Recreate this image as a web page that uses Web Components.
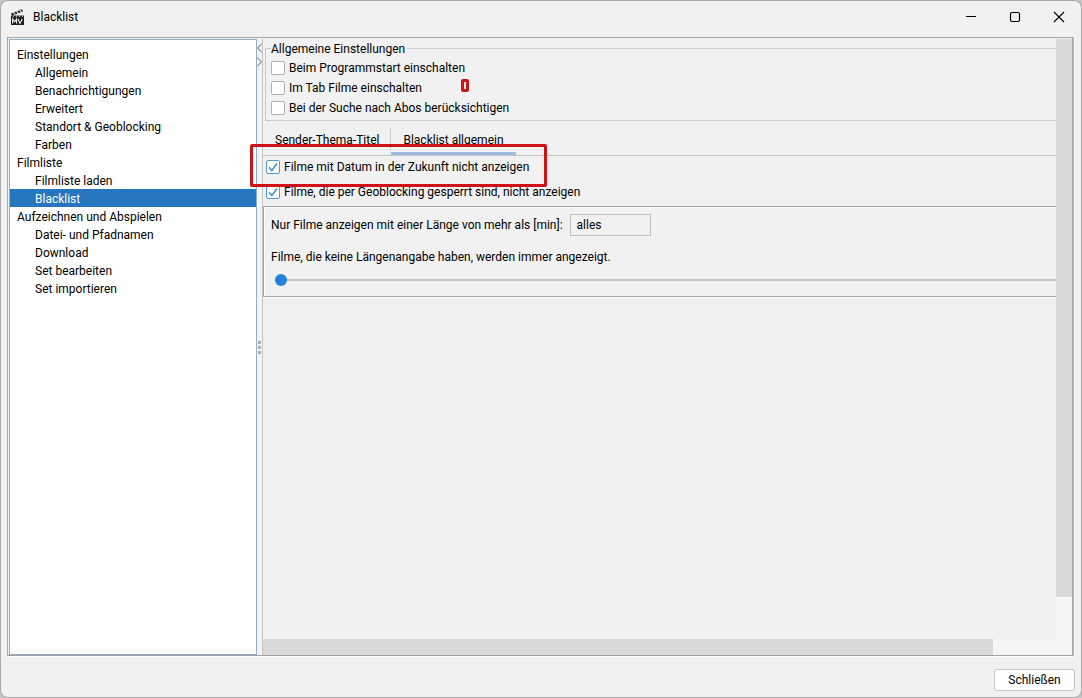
<!DOCTYPE html>
<html lang="de">
<head>
<meta charset="utf-8">
<title>Blacklist</title>
<style>
html,body{height:100%;margin:0}
body{background:#c4c4c6;font:12px/18px Roboto,"Noto Sans",sans-serif;color:#000;overflow:hidden}
</style>
</head>
<body>
<app-window>
  <title-bar slot="title">Blacklist</title-bar>
  <nav-tree slot="nav">
    <nav-item>Einstellungen</nav-item>
    <nav-item sub>Allgemein</nav-item>
    <nav-item sub>Benachrichtigungen</nav-item>
    <nav-item sub>Erweitert</nav-item>
    <nav-item sub>Standort &amp; Geoblocking</nav-item>
    <nav-item sub>Farben</nav-item>
    <nav-item>Filmliste</nav-item>
    <nav-item sub>Filmliste laden</nav-item>
    <nav-item sub selected>Blacklist</nav-item>
    <nav-item>Aufzeichnen und Abspielen</nav-item>
    <nav-item sub>Datei- und Pfadnamen</nav-item>
    <nav-item sub>Download</nav-item>
    <nav-item sub>Set bearbeiten</nav-item>
    <nav-item sub>Set importieren</nav-item>
  </nav-tree>
  <split-handle slot="split"></split-handle>
  <scroll-area slot="main">
    <group-box caption="Allgemeine Einstellungen">
      <check-row>Beim Programmstart einschalten</check-row>
      <check-row>Im Tab Filme einschalten</check-row>
      <check-row>Bei der Suche nach Abos berücksichtigen</check-row>
    </group-box>
    <tab-strip>
      <tab-button>Sender-Thema-Titel</tab-button>
      <tab-button active>Blacklist allgemein</tab-button>
    </tab-strip>
    <check-row wide checked>Filme mit Datum in der Zukunft nicht anzeigen</check-row>
    <check-row wide checked>Filme, die per Geoblocking gesperrt sind, nicht anzeigen</check-row>
    <length-filter></length-filter>
    <red-mark slot="marks" style="left:-13px;top:105px;width:291px;height:37px"></red-mark>
    <red-mark slot="marks" style="left:198px;top:40px;width:2px;height:7px"></red-mark>
  </scroll-area>
  <push-button slot="actions">Schließen</push-button>
</app-window>
<script>
function define(name, html, setup) {
  customElements.define(name, class extends HTMLElement {
    connectedCallback() {
      if (this.shadowRoot) return;
      const root = this.attachShadow({ mode: 'open' });
      root.innerHTML = html;
      if (setup) setup(this, root);
    }
  });
}

define('app-window', `
<style>
:host{display:flex;flex-direction:column;height:100vh;box-sizing:border-box;background:#f1f1f1;border:1px solid #a9a9a9;border-radius:8px;overflow:hidden}
.frame{flex:1;min-height:0;display:flex;margin:0 7px 0 6px;border:1px solid #a2a9ae;border-right:2px solid #aeaeae;border-bottom-color:#a0a0a0;padding-top:1px;box-shadow:0 1px #fff,1px 0 #fff;background:#f1f1f1}
footer{display:flex;justify-content:flex-end;padding:13px 6px 6px}
::slotted([slot=main]){flex:1;min-width:0}
</style>
<slot name="title"></slot>
<div class="frame"><slot name="nav"></slot><slot name="split"></slot><slot name="main"></slot></div>
<footer><slot name="actions"></slot></footer>`);

define('title-bar', `
<style>
:host{display:flex;align-items:center;height:32px;padding:0 0 4px 9px}
.name{margin-left:8px;flex:1}
button{width:44px;height:32px;border:0;background:none;padding:0;display:grid;place-items:center}
button svg{display:block}
</style>
<svg width="15" height="17" viewBox="0 0 15 17" aria-hidden="true">
  <path d="M1 4.600 12 .2l1 2.200L2 6.800z" fill="#222"/>
  <path d="M3.500 3.200l1.800 2.600M6.500 2l1.800 2.600M9.500.8l1.800 2.600" stroke="#f1f1f1" stroke-width="1.100"/>
  <path d="M1 6.500h13v9.500H1z" fill="#1c1c1c"/>
  <path d="M4 6.500 3 8.300M7 6.500 6 8.300M10 6.500 9 8.300M13 6.500l-1 1.800" stroke="#f1f1f1" stroke-width=".8"/>
  <path d="M2.600 14.500V10l2 2.800 2-2.800v4.500M8 10l2 4.300 2.300-4.300" fill="none" stroke="#f4f4f4" stroke-width="1.100"/>
</svg>
<span class="name"><slot></slot></span>
<button aria-label="Minimieren"><svg width="12" height="12"><path d="M1 5.500h10" stroke="#000"/></svg></button>
<button aria-label="Maximieren"><svg width="12" height="12"><rect x="1.5" y="1.5" width="9" height="9" rx="1.5" fill="none" stroke="#000" stroke-width="1.2"/></svg></button>
<button aria-label="Fenster schließen"><svg width="12" height="12"><path d="M1 1l10 10M11 1 1 11" stroke="#000" stroke-width="1.1"/></svg></button>`);

define('nav-tree', `
<style>
:host{display:block;box-sizing:border-box;width:248px;margin-left:1px;background:#fff;border:1px solid #93aec2;padding-top:5px}
</style>
<nav><slot></slot></nav>`);

define('nav-item', `
<style>
:host{display:block;height:18px}
a{display:block;height:18px;padding-left:7px;color:#000;text-decoration:none;line-height:20px}
:host([sub]) a{padding-left:25px}
:host([selected]) a{background:#2675bf;color:#fff}
</style>
<a href="#"><slot></slot></a>`);

define('split-handle', `
<style>
:host{display:flex;flex-direction:column;justify-content:space-between;width:5px;border-right:1px solid #c8c5c0;background:#f1f4f7}
svg{display:block}
.spacer{height:30px}
</style>
<svg width="5" height="30" viewBox="0 0 5 30"><path d="M5 4.500.5 9 5 13.500M0 18.500 4.500 23 0 27.500" fill="none" stroke="#566570"/></svg>
<svg width="5" height="15" viewBox="0 0 5 15"><path d="M1 1h3v3H1zM1 6h3v3H1zM1 11h3v3H1z" fill="#a9adb1"/></svg>
<span class="spacer"></span>`);

define('scroll-area', `
<style>
:host{display:grid;grid-template:minmax(0,1fr) 16px / minmax(0,1fr) 16px;position:relative;background:#f5f5f5}
.view{overflow:hidden;background:#f1f1f1}
.content{width:120%}
.v i{display:block;width:16px;height:93%;background:#dadada}
.h i{display:block;height:16px;width:92%;background:#dadada}
</style>
<div class="view"><div class="content"><slot></slot></div></div>
<div class="v"><i></i></div>
<div class="h"><i></i></div>
<div class="corner"></div>
<slot name="marks"></slot>`);

define('group-box', `
<style>
:host{display:block;padding:0 0 0 2px}
fieldset{margin:0;border:1px solid #cbcbcb;padding:1px 5px 2px}
legend{height:18px;padding:0 2px 0 0;line-height:20px}
</style>
<fieldset><legend></legend><slot></slot></fieldset>`,
(el, root) => { root.querySelector('legend').textContent = el.getAttribute('caption'); });

define('check-row', `
<style>
:host{display:block;box-sizing:border-box;height:20px}
:host([wide]){height:25px;padding:0 0 4px 3px}
label{display:flex;align-items:center;gap:4px;height:100%}
input{appearance:none;box-sizing:border-box;width:14px;height:14px;margin:0;border:1px solid #b0b0b0;border-radius:2px;background:#fff}
input:checked{border-color:#4f9bd0;background:#fff url("data:image/svg+xml,%3Csvg xmlns='http://www.w3.org/2000/svg' viewBox='0 0 12 12'%3E%3Cpath d='M2 6.200 4.800 9.500 10 2.500' fill='none' stroke='%234a94cb' stroke-width='1.700'/%3E%3C/svg%3E")}
</style>
<label><input type="checkbox"><span><slot></slot></span></label>`,
(el, root) => { root.querySelector('input').checked = el.hasAttribute('checked'); });

define('tab-strip', `
<style>
:host{display:flex;height:27px;margin-top:7px;border-bottom:1px solid #c2c2c2}
</style>
<slot></slot>`);

define('tab-button', `
<style>
:host{display:flex}
button{font:inherit;color:inherit;border:0;border-bottom:3px solid transparent;background:linear-gradient(#c8c8c8,#c8c8c8) right top/1px 22px no-repeat;padding:0 12px;height:27px}
:host([active]) button{background:none;border-bottom-color:#9bbbdf}
</style>
<button role="tab"><slot></slot></button>`);

define('length-filter', `
<style>
:host{display:block;border:1px solid #a5a5a5;box-shadow:inset 1px 1px #fff,0 1px #fff;padding:7px 7px 9px}
.row{display:flex;align-items:center;gap:7px;line-height:20px}
input[type=text]{box-sizing:border-box;width:81px;height:22px;border:1px solid #c0c0c0;background:#f1f1f1;font:inherit;color:inherit;padding:0 6px}
p{margin:12px 0 7px;line-height:18px}
input[type=range]{appearance:none;display:block;width:100%;height:14px;margin:0;padding:0 4px;box-sizing:border-box;background:none}
input[type=range]::-webkit-slider-runnable-track{height:2px;background:#c2c2c2}
input[type=range]::-webkit-slider-thumb{appearance:none;width:12px;height:12px;margin-top:-5px;border-radius:50%;background:#2580dc}
</style>
<div class="row"><label for="min">Nur Filme anzeigen mit einer Länge von mehr als [min]:</label><input id="min" type="text" value="alles" readonly></div>
<p>Filme, die keine Längenangabe haben, werden immer angezeigt.</p>
<input type="range" min="0" max="100" value="0" aria-label="Mindestlänge">`);

define('push-button', `
<style>
:host{display:block}
button{display:block;font:inherit;color:inherit;min-width:81px;height:22px;padding:0 12px;border:1px solid #c4c4c4;border-radius:3px;background:#fff}
</style>
<button><slot></slot></button>`);

define('red-mark', `
<style>
:host{position:absolute;border:3px solid #cf1218;border-radius:2px;pointer-events:none}
</style>`);
</script>
</body>
</html>
